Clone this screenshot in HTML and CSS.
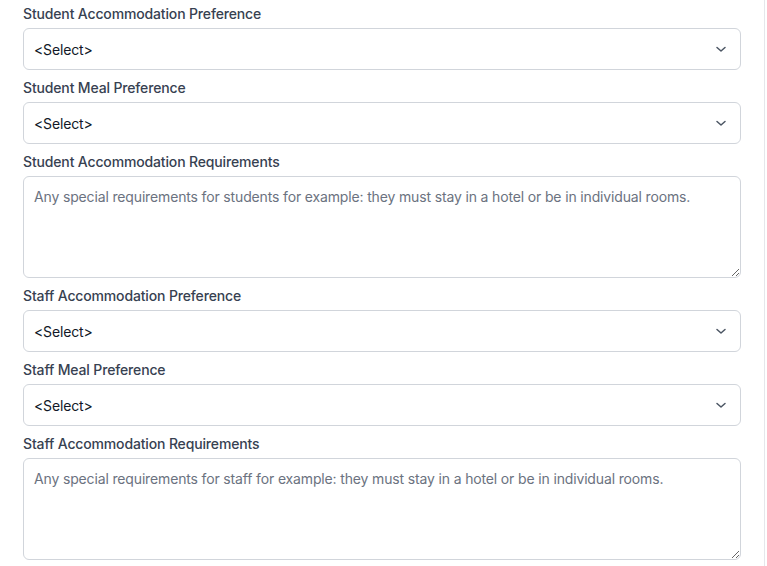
FILE: index.html
```html
<!DOCTYPE html>
<html lang="en">
<head>
    <meta charset="UTF-8">
    <meta name="viewport" content="width=device-width, initial-scale=1.0">
    <title>Accommodation</title>
    <link rel="stylesheet" href="styles.css">
</head>
<body>
    <div class="panel">
        <div class="field">
            <label>Student Accommodation Preference</label>
            <div class="select-wrap">
                <select><option>&lt;Select&gt;</option></select>
                <svg class="chevron" width="12" height="12" viewBox="0 0 12 12"><path d="M2 4.5 L6 8 L10 4.5" fill="none" stroke="#4b5563" stroke-width="1.5" stroke-linecap="round" stroke-linejoin="round"/></svg>
            </div>
        </div>
        <div class="field">
            <label>Student Meal Preference</label>
            <div class="select-wrap">
                <select><option>&lt;Select&gt;</option></select>
                <svg class="chevron" width="12" height="12" viewBox="0 0 12 12"><path d="M2 4.5 L6 8 L10 4.5" fill="none" stroke="#4b5563" stroke-width="1.5" stroke-linecap="round" stroke-linejoin="round"/></svg>
            </div>
        </div>
        <div class="field">
            <label>Student Accommodation Requirements</label>
            <textarea placeholder="Any special requirements for students for example: they must stay in a hotel or be in individual rooms."></textarea>
        </div>
        <div class="field">
            <label>Staff Accommodation Preference</label>
            <div class="select-wrap">
                <select><option>&lt;Select&gt;</option></select>
                <svg class="chevron" width="12" height="12" viewBox="0 0 12 12"><path d="M2 4.5 L6 8 L10 4.5" fill="none" stroke="#4b5563" stroke-width="1.5" stroke-linecap="round" stroke-linejoin="round"/></svg>
            </div>
        </div>
        <div class="field">
            <label>Staff Meal Preference</label>
            <div class="select-wrap">
                <select><option>&lt;Select&gt;</option></select>
                <svg class="chevron" width="12" height="12" viewBox="0 0 12 12"><path d="M2 4.5 L6 8 L10 4.5" fill="none" stroke="#4b5563" stroke-width="1.5" stroke-linecap="round" stroke-linejoin="round"/></svg>
            </div>
        </div>
        <div class="field">
            <label>Staff Accommodation Requirements</label>
            <textarea placeholder="Any special requirements for staff for example: they must stay in a hotel or be in individual rooms."></textarea>
        </div>
    </div>
</body>
</html>
```

FILE: styles.css
```css
body {
    margin: 0;
    padding: 0;
    background: #fff;
    font-family: Inter, "Liberation Sans", sans-serif;
    font-size: 14px;
    letter-spacing: -0.15px;
    overflow: hidden;
}

.panel {
    width: 718px;
    padding: 4px 23px 0 23px;
    border-right: 1px solid #e5e7eb;
    min-height: 566px;
    display: flex;
    flex-direction: column;
    gap: 8px;
}

.field {
    display: flex;
    flex-direction: column;
}

.field label {
    display: block;
    line-height: 20px;
    margin-bottom: 4px;
    font-weight: 500;
    color: #374151;
}

.select-wrap {
    position: relative;
}

select {
    appearance: none;
    -webkit-appearance: none;
    width: 100%;
    height: 42px;
    box-sizing: border-box;
    padding: 0 36px 0 10px;
    border: 1px solid #d1d5db;
    border-radius: 6px;
    background: #fff;
    font-family: inherit;
    font-size: 14px;
    letter-spacing: -0.15px;
    color: #111827;
    outline: none;
}

.chevron {
    position: absolute;
    right: 14px;
    top: 15px;
    pointer-events: none;
}

textarea {
    width: 100%;
    height: 102px;
    box-sizing: border-box;
    padding: 10px 10px;
    border: 1px solid #d1d5db;
    border-radius: 6px;
    font-family: inherit;
    font-size: 14px;
    letter-spacing: -0.15px;
    line-height: 20px;
    color: #111827;
    outline: none;
    resize: vertical;
}

textarea::placeholder {
    color: #6b7280;
}
```
